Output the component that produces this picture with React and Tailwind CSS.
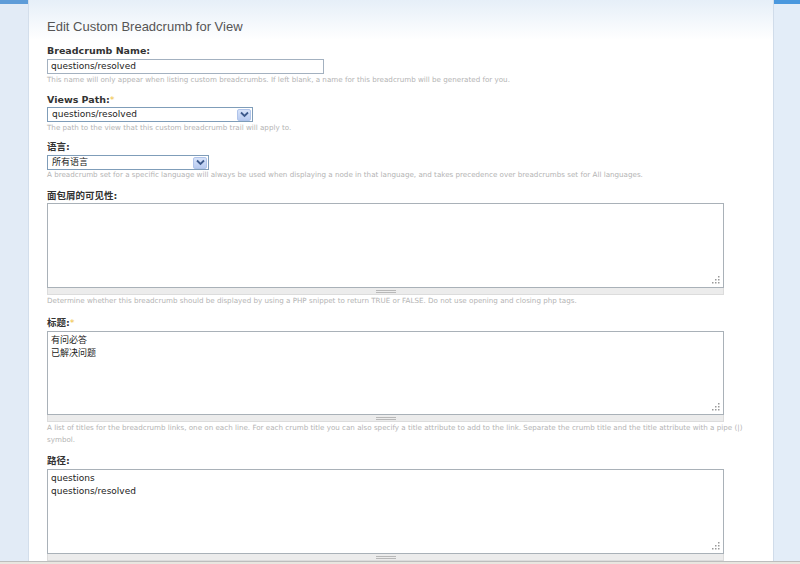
import React from 'react';

/* ─── Small pieces ───────────────────────────────────────── */
const Chevron = () => (
  <svg width="9" height="7" viewBox="0 0 9 7">
    <path d="M1 1.5 L4.5 5 L8 1.5" fill="none" stroke="#3d5a8c" strokeWidth="1.8" />
  </svg>
);

const Label = ({ children, required, className = '' }) => (
  <div className={`h-[14px] leading-[14px] text-[9.5px] font-bold text-[#333] ${className}`}>
    {children}
    {required && <span className="text-[#f0c040] font-normal">*</span>}
  </div>
);

const Desc = ({ children, className = '' }) => (
  <div className={`text-[7.15px] leading-[12px] text-[#b4b4b4] ${className}`}>{children}</div>
);

const Select = ({ value, width }) => (
  <div className={`${width} h-[15px] border border-[#7f9db9] bg-white flex items-center`}>
    <span className="flex-1 pl-[4px] text-[9px] leading-[13px] text-[#222] truncate">{value}</span>
    <span className="w-[14px] h-[12px] mr-[1px] rounded-[2px] bg-gradient-to-b from-[#d8e4fa] to-[#b8cbf0] border border-[#b0c4ea] flex items-center justify-center">
      <Chevron />
    </span>
  </div>
);

const Dots = () => (
  <svg width="9" height="9" viewBox="0 0 9 9" className="absolute right-[3px] bottom-[3px]">
    {[[7, 1], [7, 4], [4, 4], [7, 7], [4, 7], [1, 7]].map(([x, y], i) => (
      <rect key={i} x={x} y={y} width="1.5" height="1.5" fill="#9a9a9a" />
    ))}
  </svg>
);

const TextArea = ({ lines = [], height = 'h-[85px]' }) => (
  <div className="w-[677px]">
    <div className={`relative ${height} border border-[#a9b1b8] bg-white px-[3px] pt-[2px]`}>
      {lines.map((l, i) => (
        <div key={i} className="text-[9px] leading-[13px] text-[#222]">{l}</div>
      ))}
      <Dots />
    </div>
    <div className="h-[7px] bg-[#ececec] border-x border-b border-[#dcdcdc] flex flex-col items-center justify-center gap-[1px]">
      <div className="w-[20px] h-px bg-[#b8b8b8]" />
      <div className="w-[20px] h-px bg-[#b8b8b8]" />
    </div>
  </div>
);

const cjk = { fontFamily: '"DejaVu Sans", "Noto Sans CJK SC", sans-serif' };

/* ─── Page ───────────────────────────────────────────────── */
export default function App() {
  return (
    <div className="w-[800px] h-[564px] overflow-hidden flex flex-col bg-white" style={cjk}>
      <div className="flex flex-1 min-h-0">
        {/* left strip */}
        <div className="w-[29px] flex flex-col bg-[#e2ebf6] border-r border-[#d3deeb]">
          <div className="h-[4px] bg-[#5e9cd8]" />
        </div>

        {/* main panel */}
        <div className="flex-1 flex flex-col bg-gradient-to-b from-[#e6eff8] via-white to-white bg-no-repeat [background-size:100%_80px]">
          <div className="h-[4px] bg-[#cfe1f2]" />
          <div className="pl-[18px] flex flex-col">
            <h1
              className="mt-[19px] h-[16px] leading-[16px] text-[13px] text-[#555]"
              style={{ fontFamily: '"Liberation Sans", Arial, sans-serif' }}
            >
              Edit Custom Breadcrumb for View
            </h1>

            <Label className="mt-[9px]">Breadcrumb Name:</Label>
            <div className="mt-[1px] w-[277px] h-[15px] border border-[#a3b1c0] bg-white pl-[3px] text-[9px] leading-[13px] text-[#222]">
              questions/resolved
            </div>
            <Desc className="mt-[0px]">
              This name will only appear when listing custom breadcrumbs. If left blank, a name for this breadcrumb will be generated for you.
            </Desc>

            <Label className="mt-[7px]" required>Views Path:</Label>
            <div className="mt-[0px]">
              <Select value="questions/resolved" width="w-[206px]" />
            </div>
            <Desc>The path to the view that this custom breadcrumb trail will apply to.</Desc>

            <Label className="mt-[6px]">语言:</Label>
            <div className="mt-[1px]">
              <Select value="所有语言" width="w-[162px]" />
            </div>
            <Desc className="-mt-[1px]">
              A breadcrumb set for a specific language will always be used when displaying a node in that language, and takes precedence over breadcrumbs set for All languages.
            </Desc>

            <Label className="mt-[8px]">面包屑的可见性:</Label>
            <div className="mt-[0px]">
              <TextArea />
            </div>
            <Desc className="mt-[0px]">
              Determine whether this breadcrumb should be displayed by using a PHP snippet to return TRUE or FALSE. Do not use opening and closing php tags.
            </Desc>

            <Label className="mt-[9px]" required>标题:</Label>
            <div className="mt-[1px]">
              <TextArea lines={['有问必答', '已解决问题']} height="h-[84px]" />
            </div>
            <Desc className="w-[700px]">
              A list of titles for the breadcrumb links, one on each line. For each crumb title you can also specify a title attribute to add to the link. Separate the crumb title and the title attribute with a pipe (|) symbol.
            </Desc>

            <Label className="mt-[8px]">路径:</Label>
            <div className="mt-[1px]">
              <TextArea lines={['questions', 'questions/resolved']} />
            </div>
          </div>
        </div>

        {/* right strip */}
        <div className="w-[27px] flex flex-col bg-[#e3edf8] border-l border-[#d0dcea]">
          <div className="h-[4px] bg-[#4a98de]" />
        </div>
      </div>
      <div className="h-[3px] bg-[#e9e6e0] border-t border-[#bdbdbd]" />
    </div>
  );
}
